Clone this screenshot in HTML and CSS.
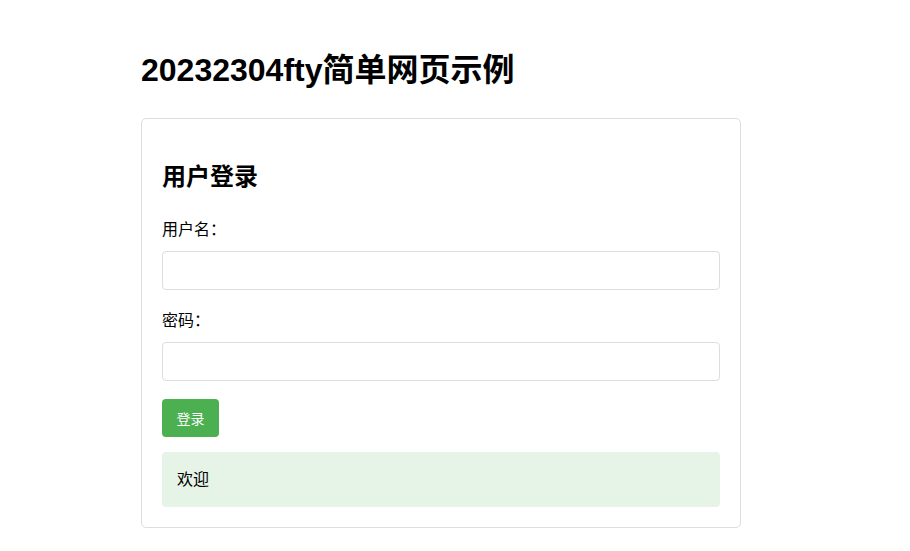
FILE: index.html
```html
<!DOCTYPE html>
<html lang="zh">
<head>
<meta charset="utf-8">
<title>20232304fty简单网页示例</title>
<link rel="stylesheet" href="styles.css">
</head>
<body>
<div class="page">
  <h1 class="title">20232304fty简单网页示例</h1>
  <div class="card">
    <h2 class="card-title">用户登录</h2>
    <form class="form">
      <label class="label" for="username">用户名：</label>
      <input class="input" id="username" type="text">
      <label class="label" for="password">密码：</label>
      <input class="input" id="password" type="password">
      <button class="btn" type="button">登录</button>
    </form>
    <div class="message">欢迎</div>
  </div>
</div>
</body>
</html>
```

FILE: styles.css
```css
html, body {
  margin: 0;
  padding: 0;
  background: #fff;
}
body {
  font-family: "Liberation Sans", Arial, "Noto Sans CJK SC", sans-serif;
  color: #000;
}
.page {
  width: 600px;
  margin-left: 141px;
  padding-top: 47px;
}
.title {
  font-size: 32px;
  font-weight: bold;
  margin: 0 0 25px 0;
  line-height: 46px;
}
.card {
  border: 1px solid #ddd;
  border-radius: 5px;
  padding: 20px;
}
.card-title {
  font-size: 24px;
  font-weight: bold;
  margin: 20px 0 23px 0;
  line-height: 35px;
}
.form {
  display: flex;
  flex-direction: column;
  align-items: flex-start;
}
.label {
  font-size: 16px;
  line-height: 24px;
  padding-top: 1px;
  margin: 0 0 9px 0;
}
.input {
  box-sizing: border-box;
  width: 100%;
  height: 39px;
  border: 1px solid #ddd;
  border-radius: 4px;
  padding: 8px;
  margin: 0 0 18px 0;
  font-size: 16px;
}
.btn {
  box-sizing: border-box;
  width: 57px;
  height: 38px;
  background: #4caf50;
  color: #fff;
  border: none;
  border-radius: 4px;
  font-family: "Liberation Sans", Arial, "Noto Sans CJK SC", sans-serif;
  font-size: 14px;
  padding: 0;
  margin: 0 0 15px 0;
}
.message {
  background: #e6f4e7;
  border-radius: 4px;
  padding: 16px 15px;
  font-size: 16px;
  line-height: 23px;
}
```
